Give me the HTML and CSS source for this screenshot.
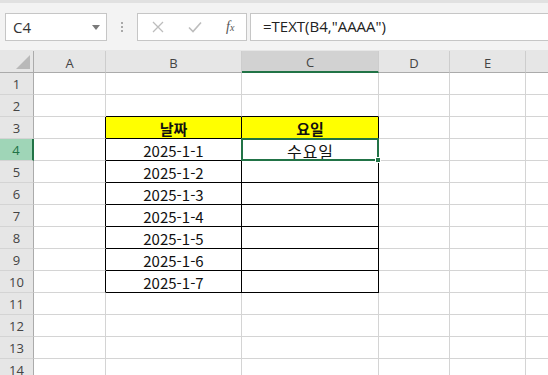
FILE: index.html
```html
<!DOCTYPE html>
<html lang="ko">
<head>
  <meta charset="UTF-8">
  <title>TEXT 요일</title>
  <link rel="stylesheet" href="styles.css">
</head>
<body>

  <div class="toolbar">
    <div class="name-box">
      <span>C4</span>
      <span class="caret"></span>
    </div>
    <div class="grip"><i></i><i></i><i></i></div>
    <div class="fx-box">
      <svg width="12" height="12" viewBox="0 0 12 12"><path d="M1 1 L11 11 M11 1 L1 11" stroke="#bdbdbd" stroke-width="1.3" fill="none"/></svg>
      <svg width="14" height="12" viewBox="0 0 14 12"><path d="M1 6.5 L5 10.5 L13 1.5" stroke="#bdbdbd" stroke-width="1.6" fill="none"/></svg>
      <span class="fx">f<sub>x</sub></span>
    </div>
    <div class="formula">=TEXT(B4,"AAAA")</div>
  </div>

  <div class="sheet">
    <div class="hd corner">
      <svg width="14" height="14" viewBox="0 0 14 14"><polygon points="14,0 14,14 0,14" fill="#b9b9b9"/></svg>
    </div>
    <div class="hd col">A</div>
    <div class="hd col">B</div>
    <div class="hd col sel-col">C</div>
    <div class="hd col">D</div>
    <div class="hd col">E</div>
    <div class="hd col last"></div>

    <div class="hd row">1</div>
    <div class="cell"></div><div class="cell"></div><div class="cell"></div><div class="cell"></div><div class="cell"></div><div class="cell last"></div>

    <div class="hd row">2</div>
    <div class="cell"></div><div class="cell bb"></div><div class="cell bb"></div><div class="cell"></div><div class="cell"></div><div class="cell last"></div>

    <div class="hd row">3</div>
    <div class="cell br"></div><div class="cell box title">날짜</div><div class="cell box title">요일</div><div class="cell"></div><div class="cell"></div><div class="cell last"></div>

    <div class="hd row sel-row">4</div>
    <div class="cell br"></div><div class="cell box">2025-1-1</div>
    <div class="cell box active"><span class="value">수요일</span><span class="cursor"></span><span class="handle"></span></div>
    <div class="cell"></div><div class="cell"></div><div class="cell last"></div>

    <div class="hd row">5</div>
    <div class="cell br"></div><div class="cell box">2025-1-2</div><div class="cell box"></div><div class="cell"></div><div class="cell"></div><div class="cell last"></div>

    <div class="hd row">6</div>
    <div class="cell br"></div><div class="cell box">2025-1-3</div><div class="cell box"></div><div class="cell"></div><div class="cell"></div><div class="cell last"></div>

    <div class="hd row">7</div>
    <div class="cell br"></div><div class="cell box">2025-1-4</div><div class="cell box"></div><div class="cell"></div><div class="cell"></div><div class="cell last"></div>

    <div class="hd row">8</div>
    <div class="cell br"></div><div class="cell box">2025-1-5</div><div class="cell box"></div><div class="cell"></div><div class="cell"></div><div class="cell last"></div>

    <div class="hd row">9</div>
    <div class="cell br"></div><div class="cell box">2025-1-6</div><div class="cell box"></div><div class="cell"></div><div class="cell"></div><div class="cell last"></div>

    <div class="hd row">10</div>
    <div class="cell br"></div><div class="cell box">2025-1-7</div><div class="cell box"></div><div class="cell"></div><div class="cell"></div><div class="cell last"></div>

    <div class="hd row">11</div>
    <div class="cell"></div><div class="cell"></div><div class="cell"></div><div class="cell"></div><div class="cell"></div><div class="cell last"></div>

    <div class="hd row">12</div>
    <div class="cell"></div><div class="cell"></div><div class="cell"></div><div class="cell"></div><div class="cell"></div><div class="cell last"></div>

    <div class="hd row">13</div>
    <div class="cell"></div><div class="cell"></div><div class="cell"></div><div class="cell"></div><div class="cell"></div><div class="cell last"></div>

    <div class="hd row">14</div>
    <div class="cell"></div><div class="cell"></div><div class="cell"></div><div class="cell"></div><div class="cell"></div><div class="cell last"></div>
  </div>

</body>
</html>
```

FILE: styles.css
```css
/* reset */
* { box-sizing: border-box; margin: 0; padding: 0; }

body {
  font-family: "Noto Sans CJK KR", "Noto Sans", sans-serif;
  background: #fff;
  width: 548px;
  height: 375px;
  overflow: hidden;
}

/* formula bar */
.toolbar {
  display: flex;
  align-items: flex-start;
  height: 51px;
  padding: 10px 0 0 5px;
  background: #f3f3f3;
  border-top: 3px solid #e1e1e1;
  border-bottom: 1px solid #e6e6e6;
}

.name-box {
  display: flex;
  align-items: center;
  justify-content: space-between;
  width: 102px;
  height: 28px;
  padding: 0 6px 0 7px;
  background: #fff;
  border: 1px solid #c6c6c6;
  font-family: "Open Sans", "Noto Sans", sans-serif;
  font-size: 15px;
  color: #333;
}
.name-box .caret {
  width: 0;
  height: 0;
  border-left: 4px solid transparent;
  border-right: 4px solid transparent;
  border-top: 5px solid #7a7a7a;
}

.grip {
  display: flex;
  flex-direction: column;
  align-items: center;
  gap: 2px;
  width: 30px;
  padding-top: 9px;
}
.grip i {
  display: block;
  width: 2px;
  height: 2px;
  background: #a9a9a9;
}

.fx-box {
  display: flex;
  align-items: center;
  width: 110px;
  height: 28px;
  padding-left: 14px;
  gap: 24px;
  background: #fff;
  border: 1px solid #c6c6c6;
}
.fx-box .fx {
  font-family: "Liberation Serif", serif;
  font-style: italic;
  font-size: 14px;
  color: #555;
}
.fx-box .fx sub {
  font-size: 10px;
  vertical-align: 0;
}

.formula {
  flex: 1;
  height: 28px;
  margin-left: 3px;
  padding: 2px 0 0 12px;
  background: #fff;
  border: 1px solid #c6c6c6;
  border-right: none;
  font-family: "Open Sans", "Noto Sans", sans-serif;
  font-size: 15px;
  color: #222;
}

/* grid */
.sheet {
  display: grid;
  grid-template-columns: 34px 72px 136px 137px 71px 76px 1fr;
  grid-auto-rows: 22px;
}

.hd {
  display: flex;
  align-items: center;
  justify-content: center;
  background: #e6e6e6;
  font-family: "Open Sans", "Noto Sans", sans-serif;
  font-size: 13px;
  color: #444;
}
.hd.col {
  border-right: 1px solid #cdcdcd;
  border-bottom: 1px solid #ababab;
  padding-top: 2px;
}
.hd.col.last { border-right: none; }
.hd.corner {
  justify-content: flex-end;
  align-items: flex-end;
  padding: 0 3px 3px 0;
  border-right: 1px solid #ababab;
  border-bottom: 1px solid #ababab;
}
.hd.row {
  border-right: 1px solid #ababab;
  border-bottom: 1px solid #d4d4d4;
  padding-top: 1px;
}
.hd.sel-col {
  background: #d2d2d2;
  border-bottom: 2px solid #217346;
}
.hd.sel-row {
  background: #9fd5b7;
  color: #217346;
  border-right: 2px solid #217346;
}

.cell {
  display: flex;
  align-items: center;
  justify-content: center;
  border-right: 1px solid #d4d4d4;
  border-bottom: 1px solid #d4d4d4;
  font-size: 15px;
  color: #111;
  padding-top: 2px;
}
.cell.last { border-right: none; }
.cell.br { border-right-color: #000; }
.cell.bb { border-bottom-color: #000; }
.cell.box {
  border-right-color: #000;
  border-bottom-color: #000;
}
.cell.title {
  background: #ffff00;
  font-weight: bold;
}
.cell.active {
  position: relative;
}
.cell.active .value {
  font-size: 16px;
  letter-spacing: 1px;
  margin-right: -1px;
}
.cell.active .cursor {
  position: absolute;
  left: -1px;
  top: -1px;
  right: -1px;
  bottom: -1px;
  border: 2px solid #217346;
}
.cell.active .handle {
  position: absolute;
  right: -3px;
  bottom: -3px;
  width: 6px;
  height: 6px;
  background: #217346;
  border: 1px solid #fff;
}
```
